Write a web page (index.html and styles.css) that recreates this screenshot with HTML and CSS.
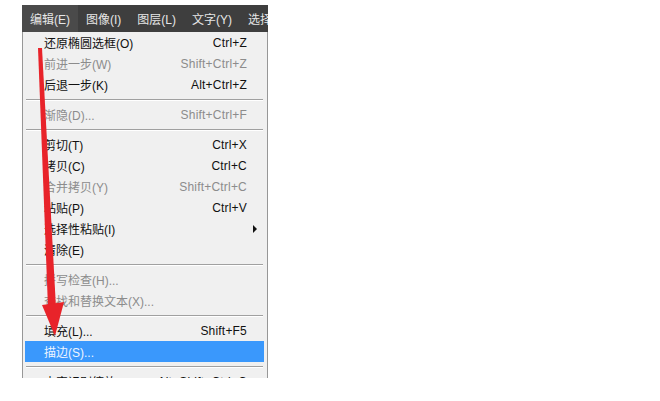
FILE: index.html
```html
<!DOCTYPE html>
<html lang="zh-CN">
<head>
    <meta charset="UTF-8">
    <title>编辑菜单</title>
    <link rel="stylesheet" href="styles.css">
</head>
<body>

<div class="shot">
    <div class="menubar">
        <span class="menubar-item active">编辑(E)</span>
        <span class="menubar-item">图像(I)</span>
        <span class="menubar-item">图层(L)</span>
        <span class="menubar-item">文字(Y)</span>
        <span class="menubar-item">选择(S)</span>
    </div>

    <div class="menu">
        <div class="item"><span>还原椭圆选框(O)</span><span class="key">Ctrl+Z</span></div>
        <div class="item off"><span>前进一步(W)</span><span class="key">Shift+Ctrl+Z</span></div>
        <div class="item"><span>后退一步(K)</span><span class="key">Alt+Ctrl+Z</span></div>
        <div class="sep"></div>
        <div class="item off"><span>渐隐(D)...</span><span class="key">Shift+Ctrl+F</span></div>
        <div class="sep"></div>
        <div class="item"><span>剪切(T)</span><span class="key">Ctrl+X</span></div>
        <div class="item"><span>拷贝(C)</span><span class="key">Ctrl+C</span></div>
        <div class="item off"><span>合并拷贝(Y)</span><span class="key">Shift+Ctrl+C</span></div>
        <div class="item"><span>粘贴(P)</span><span class="key">Ctrl+V</span></div>
        <div class="item sub"><span>选择性粘贴(I)</span><span class="arrow"></span></div>
        <div class="item"><span>清除(E)</span></div>
        <div class="sep"></div>
        <div class="item off"><span>拼写检查(H)...</span></div>
        <div class="item off"><span>查找和替换文本(X)...</span></div>
        <div class="sep"></div>
        <div class="item"><span>填充(L)...</span><span class="key">Shift+F5</span></div>
        <div class="item selected"><span>描边(S)...</span></div>
        <div class="sep"></div>
        <div class="item"><span>内容识别缩放</span><span class="key">Alt+Shift+Ctrl+C</span></div>
    </div>

    <!-- red annotation arrow drawn over the menu -->
    <svg class="mark" width="80" height="360" viewBox="0 0 80 360">
        <path d="M38 48 L42 48 L56 308 L48 308 Z" fill="#e8232a"/>
        <path d="M42 305 L64 302 L55 336 Z" fill="#e8232a"/>
    </svg>
</div>

</body>
</html>
```

FILE: styles.css
```css
body {
    margin: 0;
    background: #fff;
    font-family: "Liberation Sans", "Noto Sans CJK SC", sans-serif;
    font-size: 12px;
}

.shot {
    position: relative;
    width: 660px;
    height: 401px;
    padding: 5px 0 0 22px;
    box-sizing: border-box;
}

.menubar {
    width: 246px;
    height: 27px;
    background: #3e3e3e;
    display: flex;
    align-items: center;
    overflow: hidden;
    white-space: nowrap;
}

.menubar-item {
    color: #e6e6e6;
    padding: 0 8px;
    height: 100%;
    display: flex;
    align-items: center;
}

.menubar-item.active {
    background: #4a4a4a;
}

.menu {
    width: 246px;
    height: 346px;
    box-sizing: border-box;
    background: #f0f0f0;
    border-left: 1px solid #979797;
    border-right: 1px solid #979797;
    padding: 0 3px 0 2px;
    overflow: hidden;
}

.item {
    height: 21px;
    display: flex;
    align-items: center;
    justify-content: space-between;
    padding: 0 17px 0 19px;
    color: #111;
}

.item.off {
    color: #8c8c8c;
}

.item.selected {
    background: #3a98fc;
    color: #eef5ff;
}

.key {
    letter-spacing: 0.2px;
}

.arrow {
    width: 0;
    height: 0;
    border-top: 4px solid transparent;
    border-bottom: 4px solid transparent;
    border-left: 4px solid #111;
    margin-right: -10px;
}

.sep {
    height: 9px;
    display: flex;
    flex-direction: column;
    justify-content: center;
    padding: 0 1px;
}

.sep::before {
    content: "";
    display: block;
    height: 1px;
    background: #a0a0a0;
}

.sep::after {
    content: "";
    display: block;
    height: 1px;
    background: #fff;
}

.mark {
    position: absolute;
    left: 0;
    top: 0;
}
```
